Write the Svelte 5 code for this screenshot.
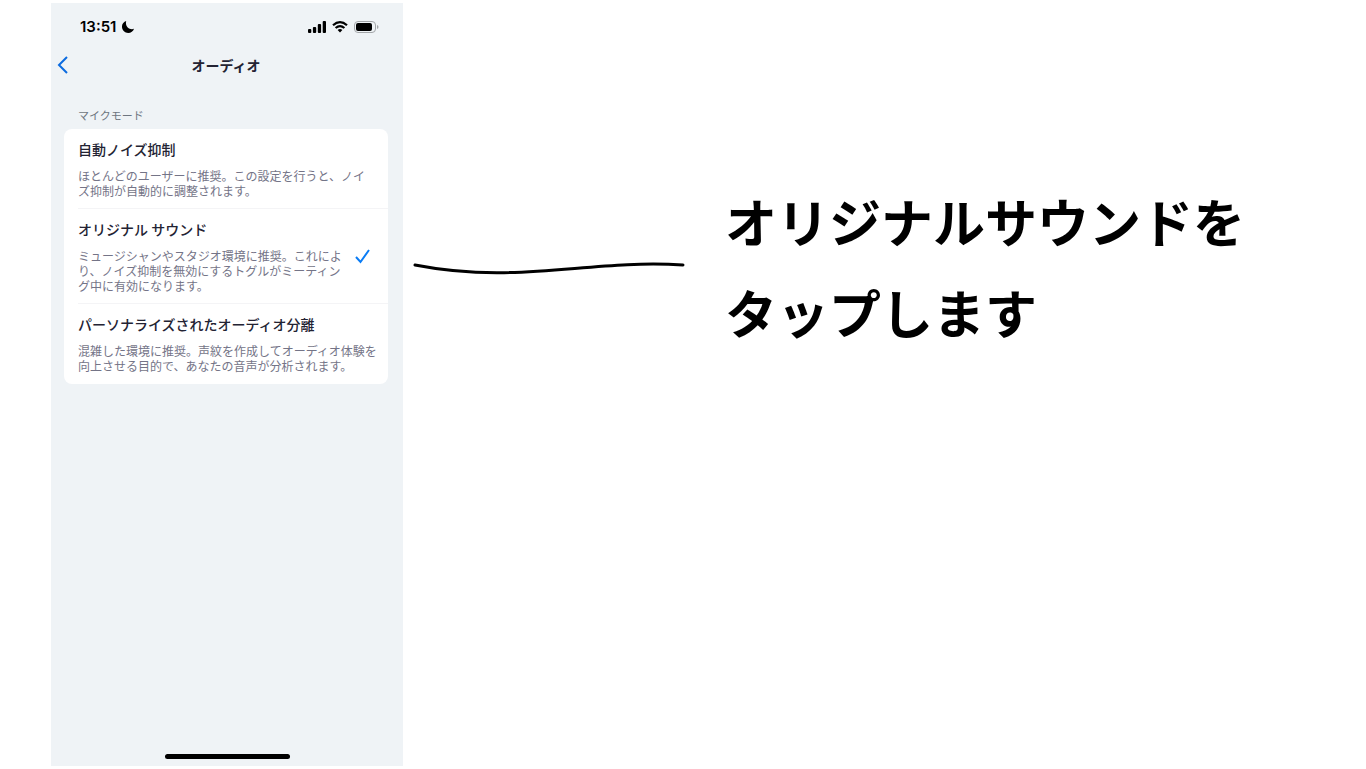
<script>
  // Audio settings screen on a phone, with a callout for the step to take.
  let selected = $state('original');

  const modes = [
    {
      id: 'auto',
      title: '自動ノイズ抑制',
      text: 'ほとんどのユーザーに推奨。この設定を行うと、ノイ\nズ抑制が自動的に調整されます。'
    },
    {
      id: 'original',
      title: 'オリジナル サウンド',
      text: 'ミュージシャンやスタジオ環境に推奨。これによ\nり、ノイズ抑制を無効にするトグルがミーティン\nグ中に有効になります。'
    },
    {
      id: 'personal',
      title: 'パーソナライズされたオーディオ分離',
      text: '混雑した環境に推奨。声紋を作成してオーディオ体験を\n向上させる目的で、あなたの音声が分析されます。'
    }
  ];
</script>

<main class="page">
  <section class="phone">
    <div class="status">
      <span class="time">13:51</span>
      <svg class="moon" width="12" height="12" viewBox="0 0 12 12" aria-hidden="true">
        <path d="M4.200 0C1.300.8-.3 3.500 0 6.300.4 9.600 3 12 6.200 12 8.900 12 11.300 10.500 12 7.800 7.500 9.300 2.700 5.500 4.200 0Z" />
      </svg>
      <div class="indicators">
        <svg width="18" height="12" viewBox="0 0 18 12" aria-hidden="true">
          <rect x="0" y="8" width="3.300" height="4" rx="1" />
          <rect x="4.900" y="6" width="3.300" height="6" rx="1" />
          <rect x="9.800" y="3" width="3.300" height="9" rx="1" />
          <rect x="14.700" y="0" width="3.300" height="12" rx="1" />
        </svg>
        <svg width="16" height="12" viewBox="0 0 16 12" aria-hidden="true">
          <g fill="none" stroke="#000" stroke-width="2.200">
            <path d="M1 4.300Q8-2 15 4.300" />
            <path d="M3.600 7Q8 3.200 12.400 7" />
          </g>
          <path d="M5.600 9Q8 7.200 10.400 9L8 11.600Z" />
        </svg>
        <svg width="25" height="12" viewBox="0 0 25 12" aria-hidden="true">
          <rect x=".5" y=".5" width="21" height="11" rx="3.500" fill="none" stroke="#a3a6a9" />
          <rect x="2" y="2" width="16" height="8" rx="2" />
          <path d="M23 4q1.500.600 1.500 2T23 8Z" fill="#a3a6a9" />
        </svg>
      </div>
    </div>

    <header class="nav">
      <button class="back" type="button" aria-label="戻る">
        <svg width="12" height="18" viewBox="0 0 12 18" aria-hidden="true">
          <path d="M10 1 2 9l8 8" fill="none" stroke="#0b6be0" stroke-width="2" />
        </svg>
      </button>
      <h1>オーディオ</h1>
    </header>

    <fieldset class="group">
      <legend>マイクモード</legend>
      <div class="card">
        {#each modes as mode (mode.id)}
          <label class="mode">
            <input type="radio" name="mic-mode" value={mode.id} bind:group={selected} />
            <span class="copy">
              <span class="title">{mode.title}</span>
              <span class="text">{mode.text}</span>
            </span>
            {#if selected === mode.id}
              <svg class="check" width="15" height="15" viewBox="0 0 15 15" aria-hidden="true">
                <path d="M1 8l4.500 5L14 1" fill="none" stroke="#0a7cf5" stroke-width="2" />
              </svg>
            {/if}
          </label>
        {/each}
      </div>
    </fieldset>

    <div class="home-bar"></div>
  </section>

  <svg class="connector" viewBox="0 0 272 14" aria-hidden="true">
    <path d="M2 4C104 24 176-2 270 4" />
  </svg>

  <p class="instruction">オリジナルサウンドを<br />タップします</p>
</main>

<style>
  :global(body) {
    margin: 0;
    background: #fff;
  }

  .page {
    display: grid;
    grid-template-columns: 352fr 322fr 641fr;
    box-sizing: border-box;
    min-height: 100vh;
    padding: 3px 0 3px 51px;
    font-family: 'Noto Sans CJK JP', sans-serif;
  }

  .phone {
    display: flex;
    flex-direction: column;
    background: #eff3f6;
  }

  .status {
    display: flex;
    align-items: center;
    height: 47px;
    padding: 0 24px 0 29px;
  }

  .time {
    font: 600 15px/20px Inter, sans-serif;
  }

  .moon {
    margin-left: 6px;
  }

  .indicators {
    display: flex;
    gap: 6px;
    margin-left: auto;
  }

  .nav {
    display: grid;
    grid-template-columns: 24px 1fr 26px;
    align-items: center;
    height: 30px;
  }

  .back {
    display: flex;
    justify-content: center;
    padding: 0;
    border: 0;
    background: none;
    cursor: pointer;
  }

  h1 {
    margin: 0;
    color: #232333;
    font-size: 14px;
    font-weight: 600;
    line-height: 20px;
    text-align: center;
  }

  .group {
    min-width: 0;
    margin: 27px 15px 0 13px;
    padding: 0;
    border: 0;
  }

  legend {
    padding: 0 14px 6px;
    color: #6e7680;
    font-size: 11px;
    line-height: 16px;
  }

  .card {
    overflow: hidden;
    border-radius: 8px;
    background: #fff;
  }

  .mode {
    display: flex;
    align-items: center;
    margin-left: 14px;
    padding: 10px 0;
    border-bottom: 1px solid #f4f4f6;
    cursor: pointer;
  }

  .mode:last-child {
    border-bottom-color: transparent;
  }

  .mode input {
    appearance: none;
    width: 0;
    height: 0;
    margin: 0;
  }

  .copy {
    display: flex;
    flex: 1;
    flex-direction: column;
    gap: 9px;
  }

  .title {
    color: #232333;
    font-size: 14px;
    font-weight: 500;
    line-height: 20px;
  }

  .text {
    color: #747487;
    font-size: 12px;
    line-height: 15px;
    white-space: pre;
  }

  .check {
    margin-right: 18px;
  }

  .home-bar {
    width: 125px;
    height: 5px;
    margin: auto auto 7px;
    border-radius: 3px;
    background: #000;
  }

  .connector {
    width: 272px;
    max-width: 100%;
    margin: 258px 0 0 10px;
  }

  .connector path {
    fill: none;
    stroke: #000;
    stroke-width: 3;
    stroke-linecap: round;
  }

  .instruction {
    margin: 172px 0 0;
    color: #000;
    font-size: 52px;
    font-weight: 700;
    line-height: 91px;
    white-space: nowrap;
  }
</style>
